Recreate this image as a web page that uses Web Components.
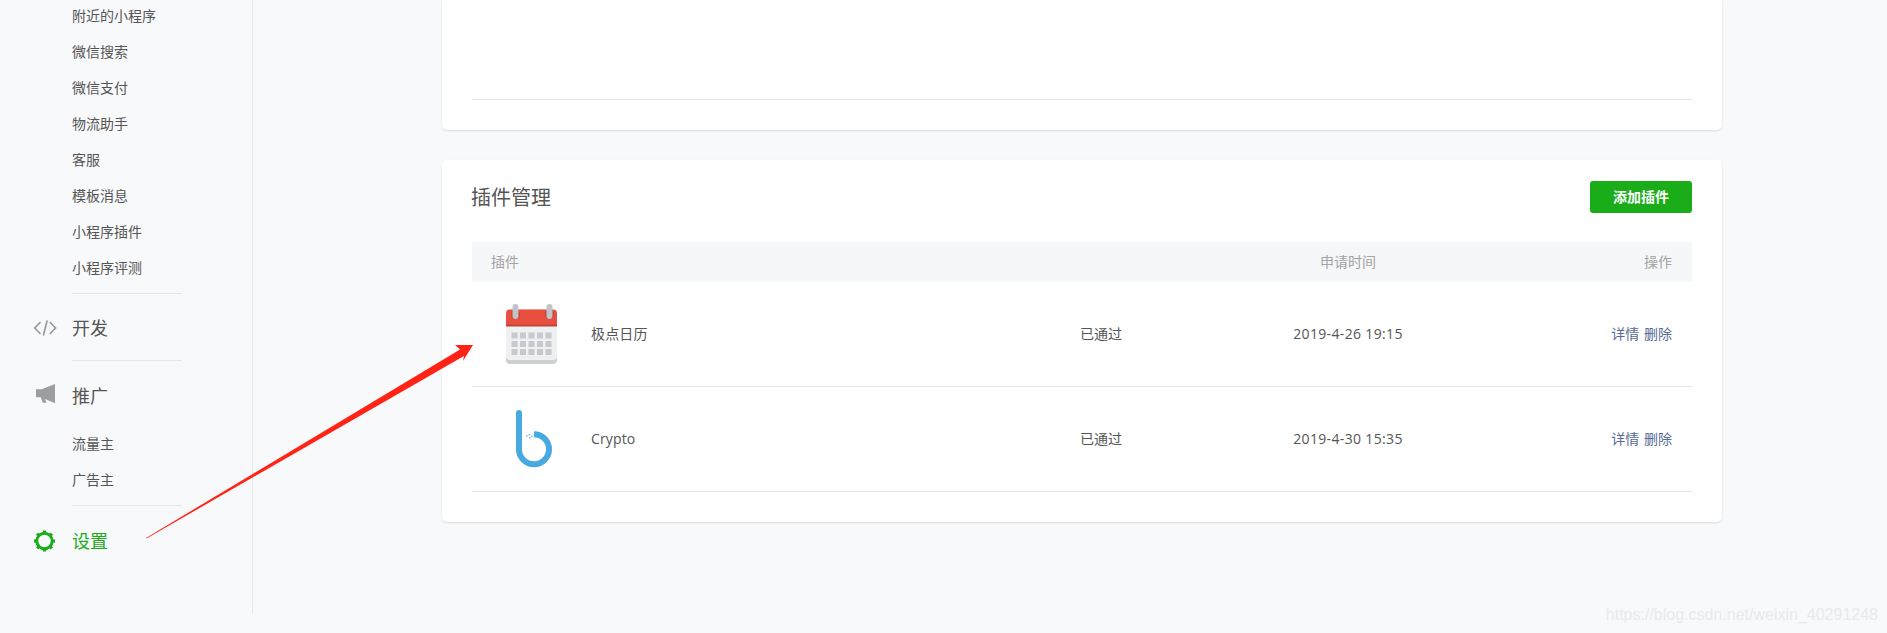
<!DOCTYPE html>
<html lang="zh-CN">
<head>
<meta charset="utf-8">
<title>插件管理</title>
<style>
  html, body { margin: 0; height: 100%; overflow: hidden; background: #f8f9fb; }
  body { font-family: "Open Sans", "Noto Sans CJK SC", sans-serif; color: #353535; }
</style>
</head>
<body>
<app-page>
  <nav-sidebar slot="side">
    <nav-list>
      <nav-link>附近的小程序</nav-link>
      <nav-link>微信搜索</nav-link>
      <nav-link>微信支付</nav-link>
      <nav-link>物流助手</nav-link>
      <nav-link>客服</nav-link>
      <nav-link>模板消息</nav-link>
      <nav-link>小程序插件</nav-link>
      <nav-link>小程序评测</nav-link>
    </nav-list>
    <nav-head>
      <svg slot="icon" width="24" height="22" viewBox="0 0 24 22" fill="none" stroke="#9a9a9a" stroke-width="1.7"><path d="M7.500 5 1.800 11l5.700 6M16.800 5l5.700 6-5.700 6M14.200 3.500 10.300 18.500"/></svg>
      开发
    </nav-head>
    <nav-head nested>
      <svg slot="icon" width="24" height="22" viewBox="0 0 24 22" fill="#9e9e9e" overflow="visible"><path d="M22 -1V18.300L12 14l1.700 3.700h-4l-2-5.400H3v-8h5.700z"/></svg>
      推广
      <nav-list slot="sub">
        <nav-link>流量主</nav-link>
        <nav-link>广告主</nav-link>
      </nav-list>
    </nav-head>
    <nav-head active>
      <svg slot="icon" width="24" height="24" viewBox="0 0 24 24" fill="#1aad19">
        <circle cx="11.500" cy="12" r="7.700" fill="none" stroke="#1aad19" stroke-width="2.900"/>
        <g>
          <rect x="9.900" y="1.500" width="3.200" height="3"/>
          <rect x="9.900" y="1.500" width="3.200" height="3" transform="rotate(45 11.500 12)"/>
          <rect x="9.900" y="1.500" width="3.200" height="3" transform="rotate(90 11.500 12)"/>
          <rect x="9.900" y="1.500" width="3.200" height="3" transform="rotate(135 11.500 12)"/>
          <rect x="9.900" y="1.500" width="3.200" height="3" transform="rotate(180 11.500 12)"/>
          <rect x="9.900" y="1.500" width="3.200" height="3" transform="rotate(225 11.500 12)"/>
          <rect x="9.900" y="1.500" width="3.200" height="3" transform="rotate(270 11.500 12)"/>
          <rect x="9.900" y="1.500" width="3.200" height="3" transform="rotate(315 11.500 12)"/>
        </g>
      </svg>
      设置
    </nav-head>
  </nav-sidebar>

  <plain-card></plain-card>

  <plugin-card heading="插件管理" action="添加插件">
    <plugin-row name="极点日历" status="已通过" time="2019-4-26 19:15">
      <svg slot="icon" width="52" height="60" viewBox="0 0 52 60">
        <rect x="0" y="5.500" width="51" height="54.500" rx="4" fill="#cdd0d2"/>
        <rect x="0" y="5.500" width="51" height="50.500" rx="4" fill="#eef0f1"/>
        <path d="M0 22V9.500a4 4 0 0 1 4-4h43a4 4 0 0 1 4 4V22z" fill="#e94f3f"/>
        <rect x="0" y="20.500" width="51" height="2" fill="#c4443a"/>
        <rect x="5" y="6" width="9" height="9" rx="4" fill="#c4443a"/>
        <rect x="39" y="6" width="9" height="9" rx="4" fill="#c4443a"/>
        <rect x="6.500" y="0" width="6" height="15" rx="3" fill="#bfc4c8"/>
        <rect x="40.500" y="0" width="6" height="15" rx="3" fill="#bfc4c8"/>
        <g fill="#c6cacd">
          <rect x="5.500" y="28.500" width="6" height="6"/><rect x="14" y="28.500" width="6" height="6"/><rect x="22.500" y="28.500" width="6" height="6"/><rect x="31" y="28.500" width="6" height="6"/><rect x="39.500" y="28.500" width="6" height="6"/>
          <rect x="5.500" y="37" width="6" height="6"/><rect x="14" y="37" width="6" height="6"/><rect x="22.500" y="37" width="6" height="6"/><rect x="31" y="37" width="6" height="6"/><rect x="39.500" y="37" width="6" height="6"/>
          <rect x="5.500" y="45" width="6" height="6"/><rect x="14" y="45" width="6" height="6"/><rect x="22.500" y="45" width="6" height="6"/><rect x="31" y="45" width="6" height="6"/><rect x="39.500" y="45" width="6" height="6"/>
        </g>
      </svg>
    </plugin-row>
    <plugin-row name="Crypto" status="已通过" time="2019-4-30 15:35">
      <svg slot="icon" width="40" height="58" viewBox="-4 0 40 58" fill="none">
        <circle cx="3" cy="3" r="3" fill="#47a9e0"/>
        <path d="M3 3V39.300A15 15 0 1 0 18 24.300" stroke="#47a9e0" stroke-width="6"/>
        <g fill="#7fc3ea"><rect x="10" y="25" width="1.600" height="1.600"/><rect x="12.500" y="24" width="1.600" height="1.600"/><rect x="13" y="27" width="1.600" height="1.600"/><rect x="15" y="25.500" width="1.600" height="1.600"/></g>
      </svg>
    </plugin-row>
  </plugin-card>

  <arrow-note slot="over"></arrow-note>
</app-page>

<script>
class AppPage extends HTMLElement {
  constructor() {
    super();
    this.attachShadow({ mode: 'open' });
    this.shadowRoot.innerHTML = `
      <style>
        :host { display: flex; position: relative; height: 633px; background: #f8f9fb; }
        .main { flex: none; width: 1280px; margin-left: 189px; display: flex; flex-direction: column; gap: 30px; }
        .mark {
          position: absolute; right: 9px; bottom: 9px;
          font: 16px "Liberation Sans", sans-serif; color: #e8e9ec;
        }
      </style>
      <slot name="side"></slot>
      <div class="main"><slot></slot></div>
      <slot name="over"></slot>
      <div class="mark">https://blog.csdn.net/weixin_40291248</div>
    `;
  }
}

class NavSidebar extends HTMLElement {
  constructor() {
    super();
    this.attachShadow({ mode: 'open' });
    this.shadowRoot.innerHTML = `
      <style>
        :host {
          display: block; flex: none; box-sizing: border-box; width: 253px; height: 613px;
          border-right: 1px solid #e7e7eb; overflow: hidden;
        }
        .inner { margin-top: -2px; }
      </style>
      <div class="inner"><slot></slot></div>
    `;
  }
}

class NavList extends HTMLElement {
  constructor() {
    super();
    this.attachShadow({ mode: 'open' });
    this.shadowRoot.innerHTML = `
      <style>:host { display: block; padding-bottom: 7px; }</style>
      <slot></slot>
    `;
  }
}

class NavLink extends HTMLElement {
  constructor() {
    super();
    this.attachShadow({ mode: 'open' });
    this.shadowRoot.innerHTML = `
      <style>
        :host { display: block; padding-left: 72px; height: 36px; line-height: 36px; font-size: 14px; color: #555; }
      </style>
      <slot></slot>
    `;
  }
}

class NavHead extends HTMLElement {
  constructor() {
    super();
    this.attachShadow({ mode: 'open' });
    this.shadowRoot.innerHTML = `
      <style>
        :host { display: block; }
        :host([active]) .row { color: #1aad19; padding: 23px 0 19px; }
        :host([nested]) .row { padding: 23px 0 18px; }
        .rule { height: 1px; margin: 0 70px 0 72px; background: #e7e7eb; }
        .row { display: flex; align-items: center; height: 24px; padding: 22px 0 20px; font-size: 18px; line-height: 24px; color: #555; }
        .icon { flex: none; width: 72px; display: flex; justify-content: flex-end; padding-right: 15px; box-sizing: border-box; }
        ::slotted(svg) { display: block; }
      </style>
      <div class="rule"></div>
      <div class="row"><div class="icon"><slot name="icon"></slot></div><slot></slot></div>
      <slot name="sub"></slot>
    `;
  }
}

class PlainCard extends HTMLElement {
  constructor() {
    super();
    this.attachShadow({ mode: 'open' });
    this.shadowRoot.innerHTML = `
      <style>
        :host {
          display: block; height: 130px; box-sizing: border-box; padding: 99px 30px 0;
          background: #fff; border-radius: 0 0 5px 5px; box-shadow: 0 1px 2px rgba(150,150,150,.3);
        }
        .rule { height: 1px; background: #e7e7eb; }
      </style>
      <div class="rule"></div>
    `;
  }
}

class PluginCard extends HTMLElement {
  constructor() {
    super();
    this.attachShadow({ mode: 'open' });
    this.shadowRoot.innerHTML = `
      <style>
        :host {
          display: block; box-sizing: border-box; padding: 21px 30px 30px;
          background: #fff; border-radius: 5px; box-shadow: 0 1px 2px rgba(150,150,150,.3);
        }
        .top { display: flex; justify-content: space-between; align-items: center; height: 32px; margin-bottom: 29px; }
        h2 { margin: -2px 0 0 -1px; font-size: 20px; font-weight: 400; color: #555; }
        button {
          width: 102px; height: 32px; border: 0; border-radius: 3px; padding: 0 0 2px;
          background: #1aad19; color: #fff; font: 700 14px "Open Sans", "Noto Sans CJK SC", sans-serif;
        }
        .head {
          display: grid; grid-template-columns: 608px 160px 216px 1fr; align-items: center;
          height: 38px; padding-bottom: 2px; background: #f6f7f9; font-size: 14px; color: #a3a3a3;
        }
        .head span:first-child { padding-left: 19px; }
        .head .time { grid-column: 3; text-align: center; }
        .head .ops { text-align: right; padding-right: 20px; }
      </style>
      <div class="top"><h2></h2><button type="button"></button></div>
      <div class="head"><span>插件</span><span class="time">申请时间</span><span class="ops">操作</span></div>
      <slot></slot>
    `;
  }

  connectedCallback() {
    this.shadowRoot.querySelector('h2').textContent = this.getAttribute('heading');
    this.shadowRoot.querySelector('button').textContent = this.getAttribute('action');
  }
}

class PluginRow extends HTMLElement {
  constructor() {
    super();
    this.attachShadow({ mode: 'open' });
    this.shadowRoot.innerHTML = `
      <style>
        :host {
          display: grid; grid-template-columns: 119px 489px 160px 216px 1fr; align-items: center;
          height: 105px; box-sizing: border-box; border-bottom: 1px solid #e7e7eb;
          font-size: 14px; color: #555;
        }
        .icon { display: flex; justify-content: center; }
        ::slotted(svg) { display: block; }
        .name, .status, .time, .ops { padding-bottom: 2px; }
        .name { letter-spacing: .15px; }
        .time { text-align: center; letter-spacing: .35px; }
        .ops { text-align: right; padding-right: 20px; color: #576b95; word-spacing: 1px; }
      </style>
      <div class="icon"><slot name="icon"></slot></div>
      <div class="name"></div>
      <div class="status"></div>
      <div class="time"></div>
      <div class="ops">详情 删除</div>
    `;
  }

  connectedCallback() {
    for (const key of ['name', 'status', 'time']) {
      this.shadowRoot.querySelector('.' + key).textContent = this.getAttribute(key);
    }
  }
}

class ArrowNote extends HTMLElement {
  constructor() {
    super();
    this.attachShadow({ mode: 'open' });
    this.shadowRoot.innerHTML = `
      <style>
        :host { display: block; position: absolute; left: 0; top: 0; width: 1887px; height: 633px; pointer-events: none; }
        svg { display: block; }
      </style>
      <svg width="1887" height="633" viewBox="0 0 1887 633">
        <polygon points="146,538 146.500,538.500 464,356 463,361 473,345 455,345 460,349.500" fill="#ff2416"/>
      </svg>
    `;
  }
}

customElements.define('app-page', AppPage);
customElements.define('nav-sidebar', NavSidebar);
customElements.define('nav-list', NavList);
customElements.define('nav-link', NavLink);
customElements.define('nav-head', NavHead);
customElements.define('plain-card', PlainCard);
customElements.define('plugin-card', PluginCard);
customElements.define('plugin-row', PluginRow);
customElements.define('arrow-note', ArrowNote);
</script>
</body>
</html>
